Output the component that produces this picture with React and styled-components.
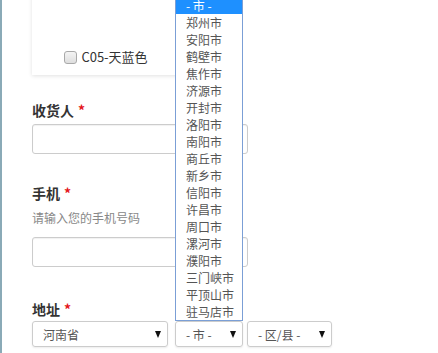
import React from 'react';
import styled, { createGlobalStyle } from 'styled-components';

const GlobalStyle = createGlobalStyle`
  body {
    margin: 0;
    background: #fff;
    font-family: "Noto Sans CJK SC", "Noto Sans", sans-serif;
  }
`;

const Page = styled.div`
  position: relative;
  min-height: 353px;
  border-left: 2px solid #8aaab7;
  padding-left: 30px;
  overflow: hidden;
`;

const Card = styled.div`
  width: 148px;
  height: 95px;
  margin-top: -20px;
  background: #fff;
  box-shadow: 0 1px 4px rgba(0, 0, 0, 0.12);
  display: flex;
  align-items: flex-end;
  justify-content: center;
  padding-bottom: 10px;
  box-sizing: border-box;
`;

const CheckRow = styled.label`
  display: flex;
  align-items: center;
  gap: 4px;
  font-size: 13px;
  color: #333;
  line-height: 16px;
`;

const Box = styled.span`
  width: 11px;
  height: 11px;
  border: 1px solid #a9a9a9;
  border-radius: 3px;
  background: linear-gradient(#f4f4f4, #dedede);
`;

const Group = styled.div`
  margin-top: ${(p) => p.$top}px;
`;

const Label = styled.div`
  font-size: 14px;
  font-weight: bold;
  color: #333;
  line-height: 20px;
`;

const Star = styled.span`
  color: #e4161b;
  margin-left: 4px;
  font-weight: bold;
`;

const Help = styled.div`
  margin-top: 5px;
  font-size: 12px;
  color: #888;
  line-height: 20px;
`;

const Input = styled.div`
  width: 216px;
  height: 30px;
  box-sizing: border-box;
  margin-top: ${(p) => p.$top}px;
  border: 1px solid #ccc;
  border-radius: 3px;
  box-shadow: inset 0 1px 1px rgba(0, 0, 0, 0.06);
`;

const SelectRow = styled.div`
  display: flex;
  margin-top: 2px;
`;

const Select = styled.div`
  width: ${(p) => p.$w}px;
  height: 26px;
  margin-right: ${(p) => p.$gap}px;
  box-sizing: border-box;
  border: 1px solid #ccc;
  border-radius: 3px;
  box-shadow: 0 1px 2px rgba(0, 0, 0, 0.08);
  display: flex;
  align-items: center;
  justify-content: space-between;
  padding: 0 6px 0 10px;
  font-size: 12px;
  color: #555;
`;

const Arrow = styled.span`
  width: 0;
  height: 0;
  border-left: 3.5px solid transparent;
  border-right: 3.5px solid transparent;
  border-top: 7px solid #111;
`;

const List = styled.ul`
  position: absolute;
  left: 173px;
  top: -4px;
  width: 68px;
  margin: 0;
  padding: 0;
  list-style: none;
  background: #fff;
  border: 1px solid #7b9fd6;
  box-sizing: border-box;
`;

const Item = styled.li`
  height: 17px;
  line-height: 17px;
  font-size: 12px;
  padding-left: 10px;
  color: ${(p) => (p.$active ? '#fff' : '#555')};
  background: ${(p) => (p.$active ? '#1e90ff' : 'transparent')};
  white-space: nowrap;
`;

const cities = [
  '郑州市', '安阳市', '鹤壁市', '焦作市', '济源市', '开封市', '洛阳市', '南阳市', '商丘市',
  '新乡市', '信阳市', '许昌市', '周口市', '漯河市', '濮阳市', '三门峡市', '平顶山市', '驻马店市',
];

export default function App() {
  return (
    <Page>
      <GlobalStyle />
      <Card>
        <CheckRow>
          <Box />
          C05-天蓝色
        </CheckRow>
      </Card>

      <Group $top={25}>
        <Label>收货人<Star>*</Star></Label>
        <Input $top={4} />
      </Group>

      <Group $top={29}>
        <Label>手机<Star>*</Star></Label>
        <Help>请输入您的手机号码</Help>
        <Input $top={9} />
      </Group>

      <Group $top={32}>
        <Label>地址<Star>*</Star></Label>
        <SelectRow>
          <Select $w={136} $gap={7}>河南省<Arrow /></Select>
          <Select $w={68} $gap={4}>- 市 -<Arrow /></Select>
          <Select $w={85} $gap={0}>- 区/县 -<Arrow /></Select>
        </SelectRow>
      </Group>

      <List>
        <Item $active>- 市 -</Item>
        {cities.map((c) => (
          <Item key={c}>{c}</Item>
        ))}
      </List>
    </Page>
  );
}
